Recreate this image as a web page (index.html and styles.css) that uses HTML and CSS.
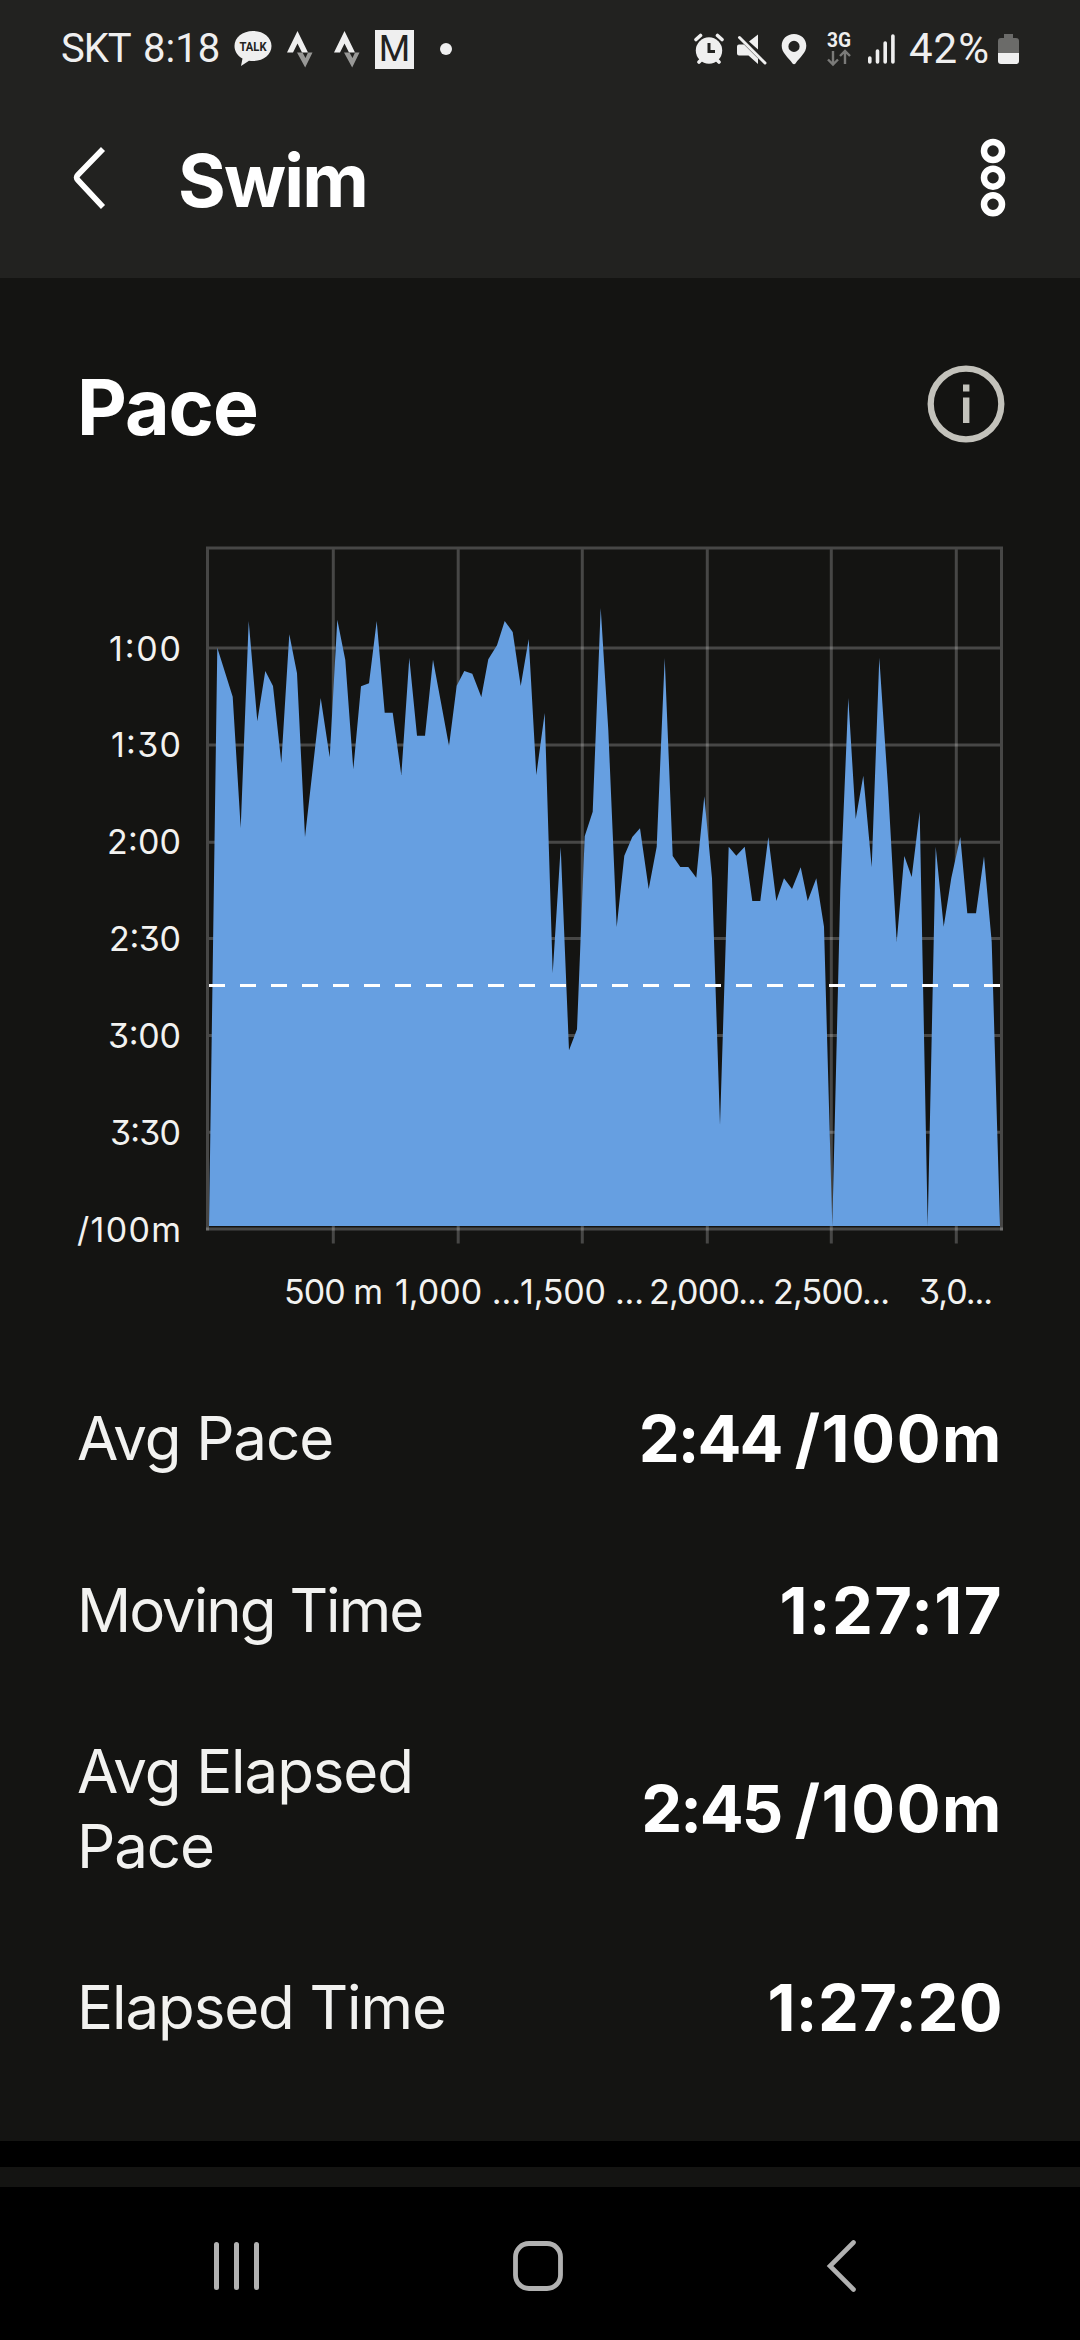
FILE: index.html
```html
<!DOCTYPE html>
<html lang="en">
<head>
  <meta charset="UTF-8">
  <title>Swim</title>
  <link rel="stylesheet" href="styles.css">
</head>
<body>

<div class="status-bar">
  <span class="carrier">SKT</span>
  <span class="clock">8:18</span>
  <svg class="talk" width="38" height="38" viewBox="0 0 38 38">
    <path d="M19 1C8.500 1 .5 7.500 .5 16c0 5.400 3 9.800 8 12.500L7 36l8-5.300c1.300.2 2.700.3 4 .3 10.500 0 18.500-6.500 18.500-15S29.500 1 19 1z" fill="#efefef"/>
    <text x="5.500" y="21" textLength="27" lengthAdjust="spacingAndGlyphs">TALK</text>
  </svg>
  <svg class="strava" width="26" height="38" viewBox="0 0 26 38">
    <path d="M10.500 1L21 22.500H15L10.500 13.500 6 22.500H0z" fill="#efefef"/>
    <path d="M10 22.500H15.500L18.500 28 21 22.500H25.500L18.200 37.500z" fill="#989896"/>
  </svg>
  <svg class="strava" width="26" height="38" viewBox="0 0 26 38">
    <path d="M10.500 1L21 22.500H15L10.500 13.500 6 22.500H0z" fill="#efefef"/>
    <path d="M10 22.500H15.500L18.500 28 21 22.500H25.500L18.200 37.500z" fill="#989896"/>
  </svg>
  <span class="m-badge">M</span>
  <span class="more-dot"></span>

  <div class="status-right">
    <svg width="30" height="32" viewBox="0 0 30 32">
      <circle cx="15" cy="17.500" r="13.200" fill="#efefef"/>
      <path d="M2 6.500L6.500 2.500M28 6.500L23.500 2.500M5 29L8 26M25 29L22 26" stroke="#efefef" stroke-width="3.600" stroke-linecap="round"/>
      <path d="M15 10v8.500h6" fill="none" stroke="#222220" stroke-width="3"/>
    </svg>
    <svg class="mute" width="30" height="32" viewBox="0 0 30 32">
      <path d="M2 11.500h5L21 25.500V31L11.500 22.500H2Q0 22.500 0 20.500V13.500Q0 11.500 2 11.500z M21 1.500V16.500L12 8.500z" fill="#efefef"/>
      <path d="M2.500 4.500L28 30" stroke="#efefef" stroke-width="3" stroke-linecap="round"/>
    </svg>
    <svg class="pin" width="26" height="32" viewBox="0 0 26 32">
      <path fill-rule="evenodd" d="M13 1C6 1 .7 6 .7 12.800.7 20 7 24 11.500 30.500q1.500 1.500 3 0C19 24 25.300 20 25.300 12.800 25.300 6 20 1 13 1zm0 6.800a5.600 5.600 0 1 1 0 11.200 5.600 5.600 0 0 1 0-11.200z" fill="#efefef"/>
    </svg>
    <svg class="network" width="26" height="44" viewBox="0 -4 26 44">
      <text x="1" y="16" textLength="24" lengthAdjust="spacingAndGlyphs">3G</text>
      <path d="M7 20V33M2 28.500L7 33.500 12 28.500M19 33V20M14 25L19 20 24 25" fill="none" stroke="#7b7b79" stroke-width="2.400"/>
    </svg>
    <svg class="signal" width="27" height="32" viewBox="0 0 27 32">
      <path d="M1.800 25V29M9.500 18V29M17.200 10V29M24.900 3V29" stroke="#efefef" stroke-width="3.600" stroke-linecap="round"/>
    </svg>
    <span class="battery-text">42%</span>
    <svg class="battery" width="21" height="30" viewBox="0 0 21 30">
      <path d="M6 0h9v4h3q3 0 3 3V19H0V7q0-3 3-3h3z" fill="#6b6b69"/>
      <path d="M0 19H21V27q0 3-3 3H3q-3 0-3-3z" fill="#efefef"/>
    </svg>
  </div>
</div>

<div class="app-bar">
  <svg width="34" height="62" viewBox="0 0 34 62">
    <path d="M30 2L4.800 28Q2.500 30.500 4.800 33L30 60" fill="none" stroke="#fff" stroke-width="5.600"/>
  </svg>
  <h1>Swim</h1>
  <svg class="menu" width="26" height="80" viewBox="0 0 26 80">
    <g fill="none" stroke="#fff" stroke-width="6.500">
      <circle cx="13" cy="13" r="9"/>
      <circle cx="13" cy="39.700" r="9"/>
      <circle cx="13" cy="66.300" r="9"/>
    </g>
  </svg>
</div>

<div class="pace-card">
  <div class="card-header">
    <h2>Pace</h2>
    <svg width="78" height="78" viewBox="0 0 78 78">
      <circle cx="39" cy="39" r="35.300" fill="none" stroke="#c3c2bb" stroke-width="6.300"/>
      <path d="M36 19.500h6.400v7H36zM36 32.500h6.400V58H36z" fill="#c3c2bb"/>
    </svg>
  </div>

  <!-- Pace over distance -->
  <svg class="chart" width="1080" height="800" viewBox="0 530 1080 800">
    <g class="grid">
      <path d="M206 548H1003"/>
      <path d="M209 648H1000"/>
      <path d="M209 745H1000"/>
      <path d="M209 842.200H1000"/>
      <path d="M209 938.500H1000"/>
      <path d="M209 1035.500H1000"/>
      <path d="M209 1132.300H1000"/>
      <path d="M206 1229H1003"/>
      <path d="M207.500 549.500V1230.500"/>
      <path d="M333.300 549.500V1243.500"/>
      <path d="M458.200 549.500V1243.500"/>
      <path d="M582.300 549.500V1243.500"/>
      <path d="M707.300 549.500V1243.500"/>
      <path d="M831.300 549.500V1243.500"/>
      <path d="M956.300 549.500V1243.500"/>
      <path d="M1001.500 549.500V1230.500"/>
    </g>
    <polygon class="area" points="209,1226 217.3,647.7 232.7,696.7 240.7,828 248.7,621 257.3,721.3 265.3,671 273,686 281.3,763 289.3,634.3 297,673.3 305,837 320.7,698 329.7,757.3 337.3,619.7 345.3,660 353.3,769.3 361,686.3 369,683.3 376.7,621 384.7,712.7 392.7,712.7 401.3,775 409.3,657.7 417,735.7 425,735.7 433,659.7 440.7,701 449,746 456.7,685.7 464.3,671 472.3,673.7 481.3,697 488.3,659.3 497,645.3 504.7,621 512.7,632 520.7,686 528.7,639 536.3,775 544.7,713 552.7,973 560.7,847 569,1050.3 577,1029.3 584.7,836.3 592.7,811.7 600.7,608 608.3,730 616.7,927 624.3,855.7 632.3,837 640,828.3 648.7,889 656.7,846.7 664.7,658 672.7,856 680.3,867 688.3,867 696.3,877.7 704.3,796.3 712,878.3 720,1125 728.7,846.7 736.3,855.7 744.7,846.7 752.3,901 760.3,901 768.3,837 776.3,901 784,878.3 792,889 800.7,867.3 807.7,901 816.3,878.3 824,926.7 832.3,1226 840.3,890 848.3,698 855.7,819 863.3,775.7 871.7,867 879.3,657.7 888,787 896.7,942 904.3,856 911.7,877 919.7,811.7 927.7,1226 935.7,846.7 943.7,926.7 951.3,878 960.3,837 967.3,913.3 976,913.3 984,856.3 991.7,941.7 1000,1226"/>
    <path class="average" d="M209 985.500H1000"/>

    <g class="axis-label">
      <text x="109" y="660.700" textLength="72">1:00</text>
      <text x="111" y="757" textLength="70">1:30</text>
      <text x="107" y="854" textLength="74">2:00</text>
      <text x="109" y="951" textLength="72">2:30</text>
      <text x="108" y="1048" textLength="73">3:00</text>
      <text x="110" y="1145" textLength="71">3:30</text>
      <text x="77" y="1241.700" textLength="104">/100m</text>
      <text x="284" y="1303.500" textLength="99">500 m</text>
      <text x="395" y="1303.500" textLength="126">1,000 ...</text>
      <text x="520" y="1303.500" textLength="124">1,500 ...</text>
      <text x="649" y="1303.500" textLength="117">2,000...</text>
      <text x="773" y="1303.500" textLength="117">2,500...</text>
      <text x="919" y="1303.500" textLength="74">3,0...</text>
    </g>
  </svg>

  <div class="stats">
    <div class="stat">
      <span class="label">Avg Pace</span>
      <span class="value">2:44 <span class="unit">/100m</span></span>
    </div>
    <div class="stat">
      <span class="label tight">Moving Time</span>
      <span class="value time wide">1:27:17</span>
    </div>
    <div class="stat">
      <span class="label">Avg Elapsed Pace</span>
      <span class="value">2:45 <span class="unit">/100m</span></span>
    </div>
    <div class="stat">
      <span class="label">Elapsed Time</span>
      <span class="value time">1:27:20</span>
    </div>
  </div>
</div>

<div class="next-card"></div>

<div class="nav-bar">
  <svg width="50" height="54" viewBox="0 0 50 54">
    <path d="M5.500 5.500V48.500M25.500 5.500V48.500M45.500 5.500V48.500" stroke="#b1b1b1" stroke-width="5" stroke-linecap="round"/>
  </svg>
  <svg class="home" width="54" height="54" viewBox="0 0 54 54">
    <rect x="4.500" y="4.500" width="45" height="45" rx="13.500" fill="none" stroke="#b1b1b1" stroke-width="4.800"/>
  </svg>
  <svg class="back" width="34" height="54" viewBox="0 0 34 54">
    <path d="M28.500 3.500L5 27 28.500 50.500" fill="none" stroke="#b1b1b1" stroke-width="4.600" stroke-linecap="round"/>
  </svg>
</div>

</body>
</html>
```
FILE: styles.css
```css
* {
  box-sizing: border-box;
}

body {
  margin: 0;
  width: 1080px;
  height: 2340px;
  background: #000;
  color: #fff;
  font-family: Inter, sans-serif;
  overflow: hidden;
}

svg {
  display: block;
  flex: none;
}

/* Status bar */
.status-bar {
  display: flex;
  align-items: center;
  height: 98px;
  padding: 0 61px;
  background: #222220;
  color: #efefef;
  font-family: Roboto, sans-serif;
  font-size: 40px;
  line-height: 40px;
}

.carrier {
  width: 82px;
  letter-spacing: -1px;
}

.clock {
  width: 91px;
}

.talk text {
  font: bold 12.5px Roboto, sans-serif;
  fill: #222220;
}

.strava {
  margin-left: 15px;
  margin-right: 6px;
}

.m-badge {
  width: 39px;
  height: 39px;
  margin-left: 9px;
  background: #efefef;
  color: #222220;
  font-size: 36px;
  line-height: 39px;
  text-align: center;
}

.more-dot {
  width: 12px;
  height: 12px;
  margin-left: 26px;
  border-radius: 50%;
  background: #efefef;
}

.status-right {
  display: flex;
  align-items: center;
  margin-left: auto;
}

.mute {
  margin-left: 13px;
}

.pin {
  margin-left: 14px;
}

.network {
  margin-left: 19px;
}

.network text {
  font: bold 20px Roboto, sans-serif;
  fill: #efefef;
}

.signal {
  margin-left: 16px;
}

.battery-text {
  width: 84px;
  margin-left: 14px;
  margin-right: 5px;
  font-size: 42px;
  letter-spacing: 1px;
}

/* App bar */
.app-bar {
  display: flex;
  align-items: center;
  height: 180px;
  padding: 0 74px 20px 73px;
  background: #222220;
}

.app-bar h1 {
  margin: 6px 0 0 71px;
  font-size: 73px;
  line-height: 80px;
  font-weight: 700;
  letter-spacing: -1.8px;
}

.menu {
  margin-left: auto;
}

/* Pace card */
.pace-card {
  height: 1863px;
  background: #141412;
}

.card-header {
  display: flex;
  justify-content: space-between;
  align-items: center;
  height: 252px;
  padding: 0 75px 0 77px;
}

.card-header h2 {
  margin: 6px 0 0;
  font-size: 77px;
  line-height: 80px;
  font-weight: 700;
  letter-spacing: -1px;
}

.grid path {
  fill: none;
  stroke: rgba(255, 255, 255, 0.22);
  stroke-width: 3;
}

.area {
  fill: #669fe1;
}

.average {
  fill: none;
  stroke: #fff;
  stroke-width: 3;
  stroke-dasharray: 16 15;
}

.axis-label {
  font-size: 34px;
  fill: #f2f2f0;
  font-feature-settings: "cv09";
}

/* Stats */
.stats {
  display: flex;
  flex-direction: column;
  gap: 75px;
  padding: 60px 77px 0;
}

.stat {
  display: flex;
  justify-content: space-between;
  align-items: center;
  min-height: 97px;
}

.label {
  width: 420px;
  font-size: 60px;
  line-height: 75px;
  letter-spacing: -1.1px;
  color: #f2f2f0;
}

.tight {
  letter-spacing: -2px;
}

.value {
  font-size: 65px;
  line-height: 80px;
  font-weight: 700;
  letter-spacing: -2px;
  white-space: nowrap;
}

.unit {
  letter-spacing: 1.6px;
}

.time {
  letter-spacing: 0.4px;
}

.wide {
  letter-spacing: 1.4px;
}

/* Top of the card below, then the system navigation */
.next-card {
  height: 20px;
  margin-top: 26px;
  background: #141412;
}

.nav-bar {
  display: flex;
  align-items: center;
  height: 153px;
  padding: 4px 0 0 211px;
}

.home {
  margin-left: 250px;
}

.back {
  margin-left: 260px;
}
```
